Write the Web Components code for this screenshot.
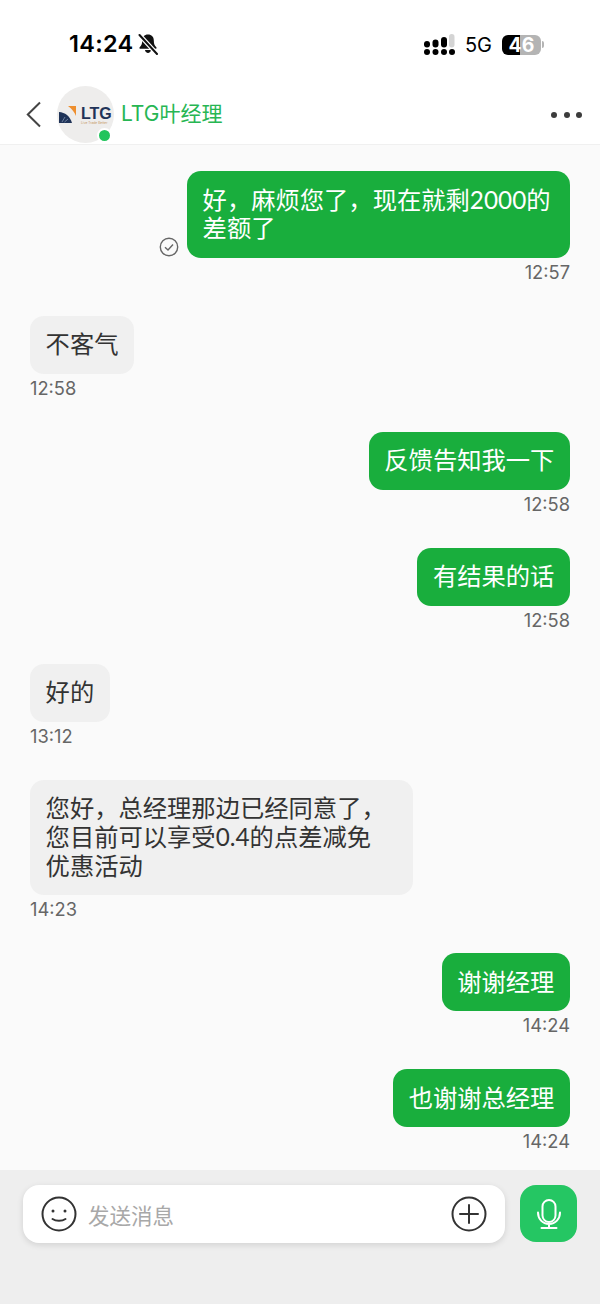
<!DOCTYPE html>
<html lang="zh">
<head>
<meta charset="utf-8">
<title>LTG叶经理</title>
<style>
  html, body { margin: 0; padding: 0; }
  body {
    width: 600px;
    height: 1304px;
    overflow: hidden;
    display: flex;
    flex-direction: column;
    background: #fafafa;
    font-family: Inter, "Noto Sans CJK SC", sans-serif;
  }
</style>
</head>
<body>
  <status-bar time="14:24" level="46"></status-bar>
  <chat-header name="LTG叶经理"></chat-header>
  <message-list>
    <chat-message side="me" time="12:57" read>好，麻烦您了，现在就剩2000的差额了</chat-message>
    <chat-message side="them" time="12:58">不客气</chat-message>
    <chat-message side="me" time="12:58">反馈告知我一下</chat-message>
    <chat-message side="me" time="12:58">有结果的话</chat-message>
    <chat-message side="them" time="13:12">好的</chat-message>
    <chat-message side="them" time="14:23">您好，总经理那边已经同意了，您目前可以享受0.4的点差减免
优惠活动</chat-message>
    <chat-message side="me" time="14:24">谢谢经理</chat-message>
    <chat-message side="me" time="14:24">也谢谢总经理</chat-message>
  </message-list>
  <chat-composer placeholder="发送消息"></chat-composer>

<script>
class StatusBar extends HTMLElement {
  constructor() {
    super();
    this.attachShadow({ mode: "open" });
  }

  connectedCallback() {
    const level = this.getAttribute("level");
    this.shadowRoot.innerHTML = `
      <style>
        :host {
          display: flex;
          align-items: center;
          flex: none;
          height: 85px;
          padding: 0 56px 0 69px;
          box-sizing: border-box;
          background: #fff;
          color: #000;
        }
        .row { display: flex; align-items: center; margin-top: 3px; }
        .time { font-size: 23.5px; font-weight: 600; letter-spacing: 0.3px; line-height: 28px; }
        .bell { margin-left: 3px; }
        .right { margin-left: auto; margin-top: 4px; }
        .net { font-size: 20px; margin: 0 10px; line-height: 24px; }
        .battery {
          width: 39px;
          height: 20px;
          border-radius: 6px;
          background: linear-gradient(90deg, #000 46%, #b4b4b4 46%);
          color: #fff;
          font-size: 19.5px;
          font-weight: 700;
          line-height: 20px;
          text-align: center;
        }
        .nub { width: 2px; height: 7px; margin-left: 1px; border-radius: 0 2px 2px 0; background: #b4b4b4; }
      </style>
      <div class="row">
        <span class="time">${this.getAttribute("time")}</span>
        <svg class="bell" width="22" height="22" viewBox="0 0 22 22">
          <path d="M11 1.500c-3.600 0-5.800 2.600-5.800 5.900 0 3.800-1 5.200-2.500 6.800-.6.700-.2 1.600.8 1.600h15c1 0 1.400-.9.800-1.600-1.500-1.600-2.500-3-2.500-6.800 0-3.300-2.200-5.900-5.800-5.900z" fill="#111"/>
          <path d="M8 17h6c-.2 1.700-1.500 2.900-3 2.900S8.200 18.700 8 17z" fill="#111"/>
          <path d="M2 1.500l18 19.500" stroke="#fff" stroke-width="4.500"/>
          <path d="M2.500 2l17.500 19" stroke="#111" stroke-width="2" stroke-linecap="round"/>
        </svg>
      </div>
      <div class="row right">
        <svg width="31" height="22" viewBox="0 0 31 22">
          <g fill="#000">
            <rect x="0" y="7" width="6" height="6.500" rx="3"/>
            <rect x="8.500" y="5.500" width="6" height="8" rx="3"/>
            <rect x="17" y="3" width="6" height="10.500" rx="3"/>
            <circle cx="3" cy="18" r="3"/>
            <circle cx="11.500" cy="18" r="3"/>
            <circle cx="20" cy="18" r="3"/>
            <circle cx="28" cy="18" r="3"/>
          </g>
          <rect x="25" y="0" width="5.500" height="13.500" rx="2.700" fill="#d4d4d4"/>
        </svg>
        <span class="net">5G</span>
        <div class="battery">${level}</div>
        <div class="nub"></div>
      </div>
    `;
  }
}

class ChatHeader extends HTMLElement {
  constructor() {
    super();
    this.attachShadow({ mode: "open" });
  }

  connectedCallback() {
    this.shadowRoot.innerHTML = `
      <style>
        :host {
          display: flex;
          align-items: center;
          flex: none;
          height: 60px;
          padding: 0 18px 0 26px;
          box-sizing: border-box;
          background: #fff;
          border-bottom: 1px solid #f0f0f0;
        }
        .avatar {
          position: relative;
          flex: none;
          width: 57px;
          height: 57px;
          margin-left: 16px;
          border-radius: 50%;
          background: #eeedec;
          display: flex;
          align-items: center;
        }
        .online {
          position: absolute;
          right: 2px;
          bottom: 0;
          width: 11px;
          height: 11px;
          border-radius: 50%;
          background: #22c45c;
          border: 2px solid #fff;
        }
        .mark { margin-left: 2px; margin-top: -1px; flex: none; }
        .logo { display: flex; flex-direction: column; margin-left: 5px; width: 31px; color: #1f3358; margin-top: 2px; }
        .logo b { font-size: 16px; line-height: 15px; font-family: "Liberation Sans", sans-serif; }
        .logo small { font-size: 3.3px; line-height: 5px; color: #c79a6a; white-space: nowrap; }
        .name { margin-left: 7px; margin-top: -6px; font-size: 21px; color: #27b653; }
        .more { margin-left: auto; display: flex; gap: 6.5px; }
        .more i { width: 6px; height: 6px; border-radius: 50%; background: #3c3c3c; }
      </style>
      <svg width="15" height="27" viewBox="0 0 15 27"><path d="M14 1.500L1.800 13.500 14 25.500" fill="none" stroke="#444" stroke-width="2"/></svg>
      <div class="avatar">
        <svg class="mark" width="17" height="17" viewBox="0 0 17 17">
          <path d="M0 6c6 .5 11 4 13 11H0z" fill="#1f3358"/>
          <path d="M9 0h8v10C15.500 6 13 3 9 0z" fill="#ee8f2f"/>
          <path d="M3 16l3-5M5.500 16l3.500-3" stroke="#8fa0bd" stroke-width=".7"/>
        </svg>
        <div class="logo"><b>LTG</b><small>Live Trade Better</small></div>
        <span class="online"></span>
      </div>
      <span class="name">${this.getAttribute("name")}</span>
      <div class="more"><i></i><i></i><i></i></div>
    `;
  }
}

class MessageList extends HTMLElement {
  constructor() {
    super();
    this.attachShadow({ mode: "open" }).innerHTML = `
      <style>
        :host {
          display: flex;
          flex-direction: column;
          flex: 1;
          min-height: 0;
          gap: 30px;
          padding: 26px 30px 0;
          background: #fafafa;
        }
      </style>
      <slot></slot>
    `;
  }
}

class ChatMessage extends HTMLElement {
  constructor() {
    super();
    this.attachShadow({ mode: "open" });
  }

  connectedCallback() {
    const readIcon = this.hasAttribute("read") ? `
      <svg class="read" width="20" height="20" viewBox="0 0 20 20">
        <circle cx="10" cy="10" r="8.700" fill="none" stroke="#666" stroke-width="1.400"/>
        <path d="M6 10.200l3 2.800 5-5.500" fill="none" stroke="#666" stroke-width="1.400"/>
      </svg>` : "";
    this.shadowRoot.innerHTML = `
      <style>
        :host {
          display: flex;
          flex-direction: column;
          align-items: flex-start;
        }
        :host([side="me"]) { align-items: flex-end; }
        .line { display: flex; align-items: flex-end; gap: 8px; }
        .read { margin-bottom: 1px; }
        .bubble {
          max-width: 383px;
          box-sizing: border-box;
          padding: 14.6px 15.6px;
          border-radius: 14px;
          font-family: Lato, "Noto Sans CJK SC", sans-serif;
          font-size: 24.3px;
          line-height: 28.8px;
          white-space: pre-line;
          background: #f0f0f0;
          color: #333;
        }
        :host([side="me"]) .bubble { background: #19ae3d; color: #fff; }
        .time { font-size: 18.3px; line-height: 27px; padding-top: 1px; color: #666; }
      </style>
      <div class="line">${readIcon}<div class="bubble"><slot></slot></div></div>
      <div class="time">${this.getAttribute("time")}</div>
    `;
  }
}

class ChatComposer extends HTMLElement {
  constructor() {
    super();
    this.attachShadow({ mode: "open" });
  }

  connectedCallback() {
    this.shadowRoot.innerHTML = `
      <style>
        :host {
          display: flex;
          align-items: flex-start;
          flex: none;
          gap: 15px;
          height: 134px;
          padding: 15px 23px 0;
          box-sizing: border-box;
          background: #eeeeee;
        }
        .field {
          flex: 1;
          height: 58px;
          display: flex;
          align-items: center;
          gap: 11px;
          padding: 0 18px;
          border-radius: 16px;
          background: #fff;
          box-shadow: 0 2px 6px rgba(0,0,0,0.12);
        }
        .hint { flex: 1; font-size: 21.5px; color: #a8a8a8; }
        .mic {
          flex: none;
          width: 57px;
          height: 57px;
          border-radius: 16px;
          background: #25c663;
          display: flex;
          align-items: center;
          justify-content: center;
        }
      </style>
      <div class="field">
        <svg width="36" height="36" viewBox="0 0 36 36" fill="none" stroke="#333" stroke-width="2">
          <circle cx="18" cy="18" r="16.500"/>
          <circle cx="12" cy="15" r="1.500" fill="#333" stroke="none"/>
          <circle cx="24" cy="15" r="1.500" fill="#333" stroke="none"/>
          <path d="M11.500 23c3.500 2.400 9.500 2.400 13 0" stroke-linecap="round"/>
        </svg>
        <span class="hint">${this.getAttribute("placeholder")}</span>
        <svg width="36" height="36" viewBox="0 0 36 36" fill="none" stroke="#333" stroke-width="2">
          <circle cx="18" cy="18" r="16.500"/>
          <path d="M18 9v18M9 18h18" stroke-linecap="round"/>
        </svg>
      </div>
      <div class="mic">
        <svg width="24" height="30" viewBox="0 0 24 30" fill="none" stroke="#fff" stroke-width="2">
          <rect x="5.500" y="1" width="13" height="22" rx="6.500"/>
          <path d="M1 13.500c0 6.500 4.500 11.500 11 11.500s11-5 11-11.500M12 25v3.500M4.500 29h15" stroke-linecap="round"/>
        </svg>
      </div>
    `;
  }
}

customElements.define("status-bar", StatusBar);
customElements.define("chat-header", ChatHeader);
customElements.define("message-list", MessageList);
customElements.define("chat-message", ChatMessage);
customElements.define("chat-composer", ChatComposer);
</script>
</body>
</html>
